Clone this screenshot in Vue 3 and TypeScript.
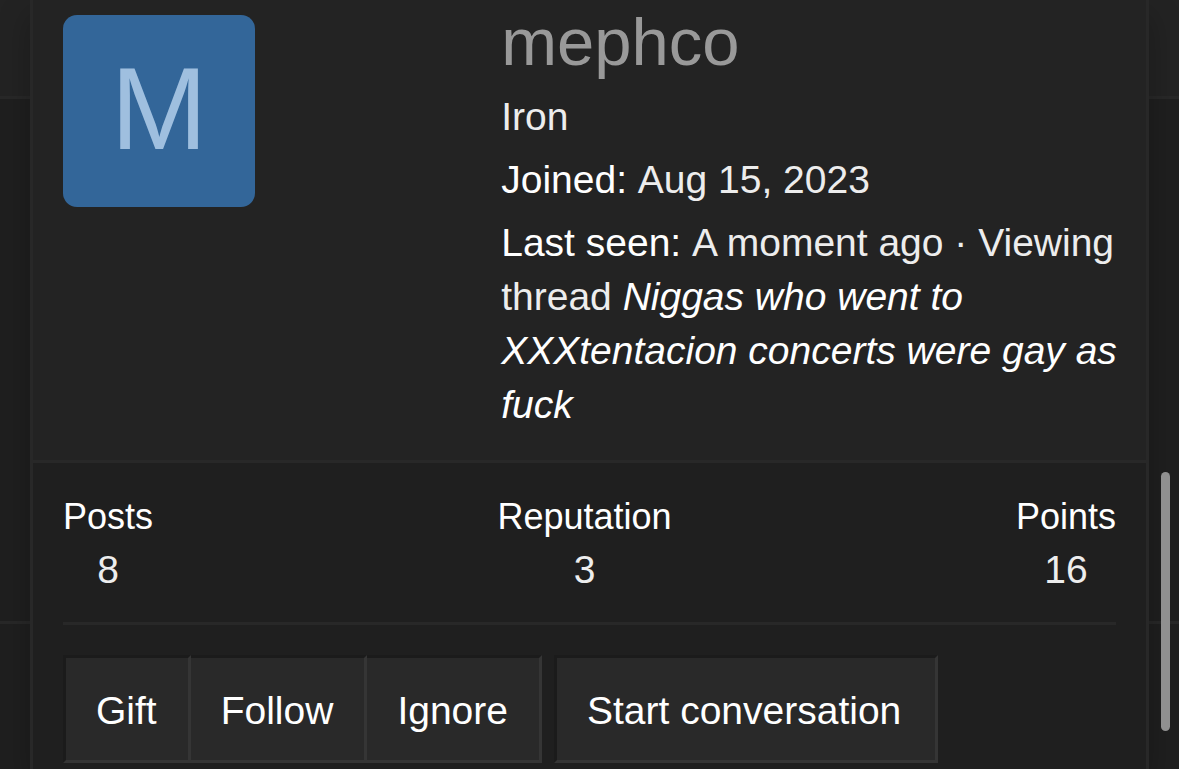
<script setup lang="ts">
interface Stat {
  label: string
  value: number
}

const stats: Stat[] = [
  { label: 'Posts', value: 8 },
  { label: 'Reputation', value: 3 },
  { label: 'Points', value: 16 },
]

const actions: string[] = ['Gift', 'Follow', 'Ignore']
</script>

<template>
  <div class="page">
    <div class="backdrop" aria-hidden="true">
      <div class="band band-top"></div>
      <div class="band band-middle"></div>
    </div>

    <main class="card">
      <header class="card-header">
        <a class="avatar" href="#" aria-label="mephco">M</a>
        <div class="info">
          <h1><a href="#">mephco</a></h1>
          <p>Iron</p>
          <dl>
            <dt>Joined:</dt>
            {{ ' ' }}
            <dd>Aug 15, 2023</dd>
          </dl>
          <dl>
            <dt>Last seen:</dt>
            {{ ' ' }}
            <dd>A moment ago · Viewing thread <a href="#"><em>Niggas who went to XXXtentacion concerts were gay as fuck</em></a></dd>
          </dl>
        </div>
      </header>

      <section class="card-body">
        <div class="stats">
          <dl v-for="stat in stats" :key="stat.label" class="stat">
            <dt>{{ stat.label }}</dt>
            <dd>{{ stat.value }}</dd>
          </dl>
        </div>
        <hr />
        <div class="actions">
          <div class="group">
            <button v-for="action in actions" :key="action" type="button">{{ action }}</button>
          </div>
          <button class="wide" type="button">Start conversation</button>
        </div>
      </section>
    </main>

    <div class="scroll-thumb" aria-hidden="true"></div>
  </div>
</template>

<style>
body {
  margin: 0;
  background: #1f1f1f;
}
</style>

<style scoped>
.page {
  position: relative;
  box-sizing: border-box;
  min-height: 100vh;
  padding: 0 30px;
  overflow: hidden;
  display: flex;
  background: #1f1f1f;
  color: #ededed;
  font-family: "Helvetica Neue", "Liberation Sans", Arial, sans-serif;
  font-size: 39px;
  line-height: 54px;
}

.backdrop {
  position: absolute;
  inset: 0;
}

.band {
  box-sizing: border-box;
  border-bottom: 3px solid #282828;
}

.band-top {
  height: 99px;
  background: #232323;
}

.band-middle {
  height: 525px;
}

.card {
  position: relative;
  flex: 1;
  min-width: 0;
  border: solid #282828;
  border-width: 0 3px;
  background: #1f1f1f;
  box-shadow: 0 15px 30px rgba(0, 0, 0, 0.25);
}

.card-header {
  display: grid;
  grid-template-columns: 12fr 17fr;
  padding: 15px 24px 28px 30px;
  border-bottom: 3px solid #282828;
  background: #232323;
}

.avatar {
  box-sizing: border-box;
  display: flex;
  align-items: center;
  justify-content: center;
  width: 192px;
  height: 192px;
  padding-bottom: 4px;
  border-radius: 14px;
  background: #336699;
  color: #9fbfdf;
  font-size: 116px;
  line-height: 1;
  text-decoration: none;
}

h1 {
  margin: 0 0 21px;
  font-size: 67px;
  font-weight: 400;
  line-height: 54px;
}

h1 a {
  color: #999999;
  text-decoration: none;
}

p,
dl,
dd {
  margin: 0;
}

.info dl {
  margin-top: 9px;
}

.info dt,
.info dd {
  display: inline;
}

dt,
dd a {
  color: #ffffff;
  text-decoration: none;
}

.card-body {
  padding: 27px 30px 0;
}

.stats {
  display: flex;
  justify-content: space-between;
  padding-bottom: 25px;
  text-align: center;
}

.stat dt {
  font-size: 36px;
  line-height: 53px;
}

hr {
  height: 3px;
  margin: 0 0 30px;
  border: 0;
  background: #282828;
}

.actions {
  display: flex;
  gap: 12px;
}

.group {
  display: flex;
}

button {
  box-sizing: border-box;
  height: 108px;
  padding: 4px 31px 0 30px;
  border: 3px solid;
  border-color: #1b1b1b #353535 #353535 #1b1b1b;
  border-radius: 0;
  background: #292929;
  color: #ffffff;
  font: inherit;
  cursor: pointer;
}

.group button + button {
  border-left: 0;
}

.wide {
  padding-right: 34px;
}

.scroll-thumb {
  position: absolute;
  top: 472px;
  right: 9px;
  width: 9px;
  height: 259px;
  border-radius: 5px;
  background: #909090;
}
</style>
